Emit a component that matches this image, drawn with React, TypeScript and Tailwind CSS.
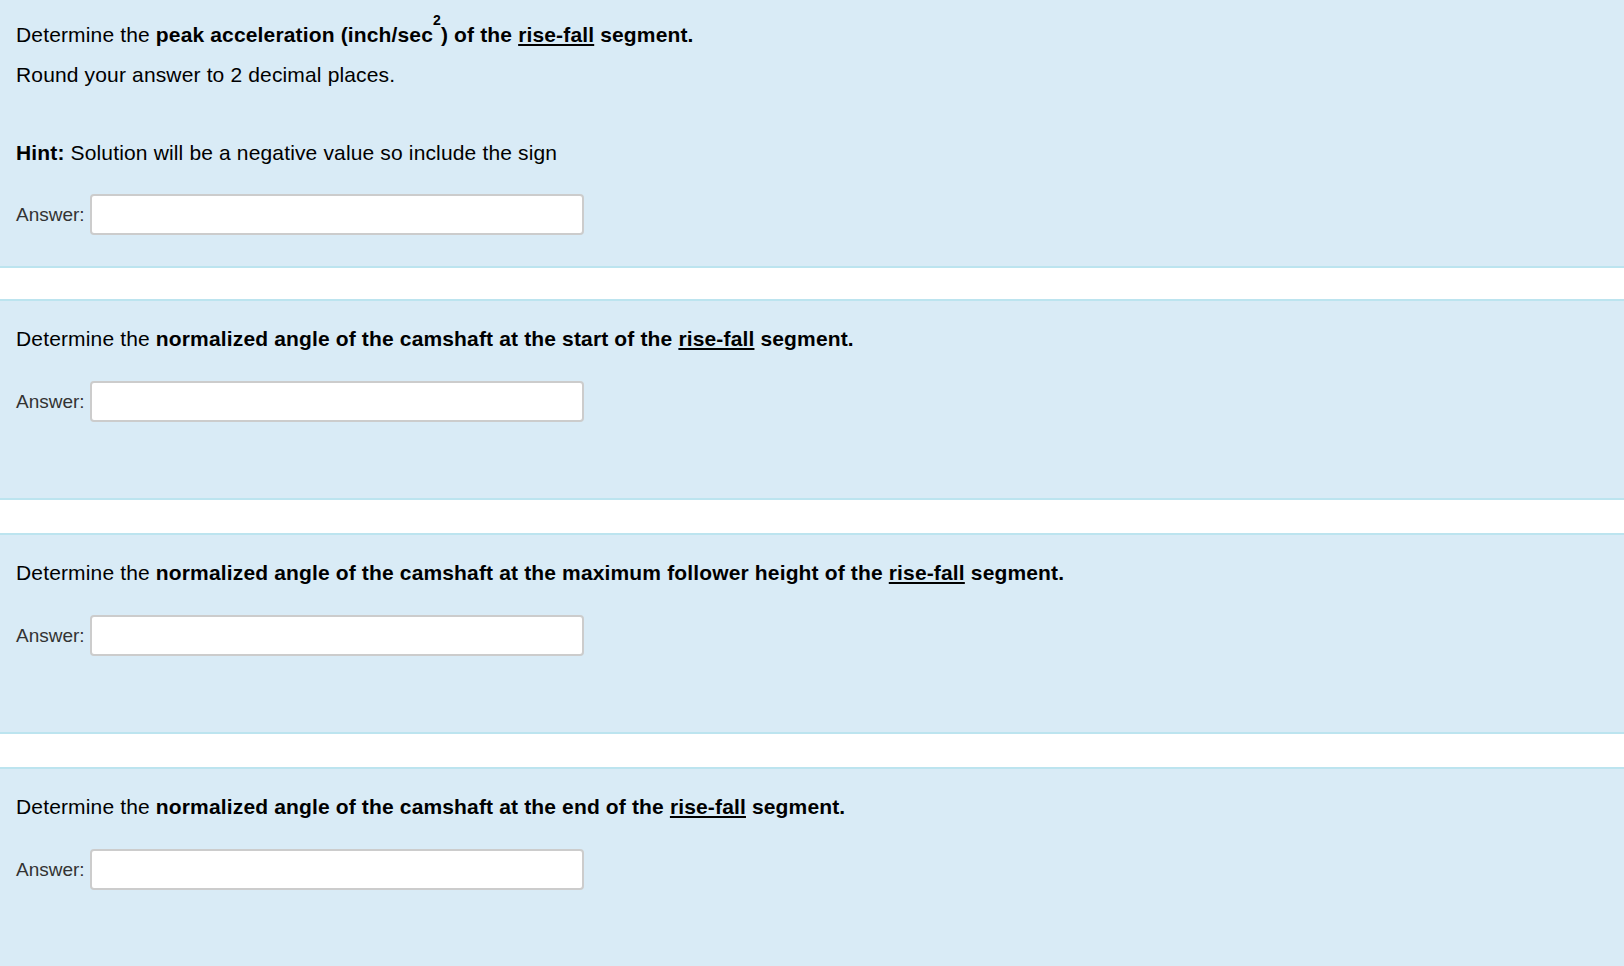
import React from 'react';

const fontCls = "font-['Liberation_Sans',Arial,Helvetica,sans-serif]";
const qCls = 'text-[21px] leading-6 tracking-[0.15px]';

function AnswerRow() {
  return (
    <div className="flex items-center gap-[5px]">
      <label className="text-[19px] leading-6 text-[#333333]">Answer:</label>
      <input type="text" className="w-[494px] h-[41px] rounded-[4px] border-2 border-[#cccccc] bg-white px-3 text-[18px] outline-none" />
    </div>
  );
}

function Term({ children }: { children: React.ReactNode }) {
  return <span className="underline decoration-2 underline-offset-[2px]">{children}</span>;
}

export default function App() {
  const sectionCls = 'bg-[#d9ebf6] border-[#bce4ef] px-4';

  return (
    <div className={`min-h-screen bg-white text-black ${fontCls}`}>
      <section className={`${sectionCls} border-b-2 pt-[23px] pb-[31px]`}>
        <p className={qCls}>
          Determine the <b>peak acceleration (inch/sec<sup className="text-[14px] -top-[17px]">2</sup>) of the <Term>rise-fall</Term> segment.</b>
        </p>
        <p className={`${qCls} mt-4`}>Round your answer to 2 decimal places.</p>
        <p className={`${qCls} mt-[54px]`}><b>Hint:</b> Solution will be a negative value so include the sign</p>
        <div className="mt-[29px]"><AnswerRow /></div>
      </section>

      <section className={`${sectionCls} border-y-2 mt-[31px] pt-[26px] pb-[76px]`}>
        <p className={qCls}>
          Determine the <b>normalized angle of the camshaft at the start of the <Term>rise-fall</Term> segment.</b>
        </p>
        <div className="mt-[30px]"><AnswerRow /></div>
      </section>

      <section className={`${sectionCls} border-y-2 mt-[33px] pt-[26px] pb-[76px]`}>
        <p className={qCls}>
          Determine the <b>normalized angle of the camshaft at the maximum follower height of the <Term>rise-fall</Term> segment.</b>
        </p>
        <div className="mt-[30px]"><AnswerRow /></div>
      </section>

      <section className={`${sectionCls} border-t-2 mt-[33px] pt-[26px] pb-[120px]`}>
        <p className={qCls}>
          Determine the <b>normalized angle of the camshaft at the end of the <Term>rise-fall</Term> segment.</b>
        </p>
        <div className="mt-[30px]"><AnswerRow /></div>
      </section>
    </div>
  );
}
